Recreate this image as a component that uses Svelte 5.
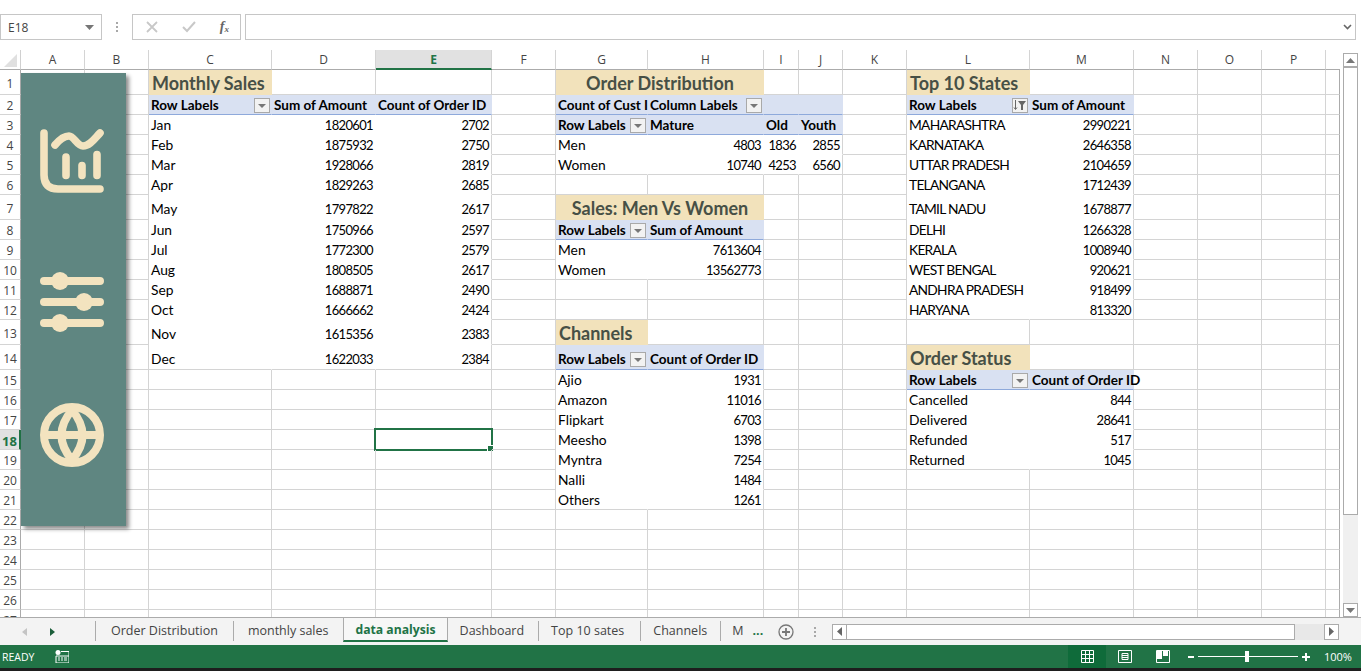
<script>
	const columns = [
		['A', 64], ['B', 64], ['C', 123], ['D', 104], ['E', 116], ['F', 64], ['G', 92], ['H', 116],
		['I', 35], ['J', 44], ['K', 64], ['L', 123], ['M', 104], ['N', 64], ['O', 64], ['P', 64], ['', 14]
	];
	const rowHeights = [25, 20, 20, 20, 20, 20, 25, 20, 20, 20, 20, 20, 25, 25, 20, 20, 20, 20, 20, 20, 20, 20, 20, 20, 20, 20, 20];
	const activeCol = 'E';
	const activeRow = 18;

	const cells = {};

	function put(ref, text, cls = '', extra = {}) {
		cells[ref] = { text, cls, ...extra };
	}

	// title strip + header row + body rows, laid into the two columns of a pivot
	function pivot(left, right, top, title, headA, headB, rows, { filter = 'down', closed = true } = {}) {
		put(left + top, title, 'title');
		put(left + (top + 1), headA, 'head', { filter });
		put(right + (top + 1), headB, 'head');
		rows.forEach(([label, value], i) => {
			const r = top + 2 + i;
			const tail = i === rows.length - 1 ? ' last-row' : '';
			const caps = /^[A-Z ]+$/.test(label) ? ' caps' : '';
			put(left + r, label, 'body' + caps + tail);
			put(right + r, value, 'body num' + (closed ? ' edge' : '') + tail);
		});
	}

	pivot('C', 'D', 1, 'Monthly Sales', 'Row Labels', 'Sum of Amount', [
		['Jan', 1820601], ['Feb', 1875932], ['Mar', 1928066], ['Apr', 1829263], ['May', 1797822], ['Jun', 1750966],
		['Jul', 1772300], ['Aug', 1808505], ['Sep', 1688871], ['Oct', 1666662], ['Nov', 1615356], ['Dec', 1622033]
	], { closed: false });
	const orderCounts = [2702, 2750, 2819, 2685, 2617, 2597, 2579, 2617, 2490, 2424, 2383, 2384];
	put('E2', 'Count of Order ID', 'head');
	orderCounts.forEach((n, i) => put('E' + (i + 3), n, i === 11 ? 'body num edge last-row' : 'body num edge'));

	// Order Distribution
	put('G1', 'Order Distribution', 'title center', { span: 2 });
	put('G2', 'Count of Cust I', 'head');
	put('H2', 'Column Labels', 'head', { filter: 'down' });
	put('I2', '', 'head');
	put('J2', '', 'head');
	put('G3', 'Row Labels', 'head rule', { filter: 'down' });
	put('H3', 'Mature', 'head rule');
	put('I3', 'Old', 'head rule');
	put('J3', 'Youth', 'head rule');
	[['Men', 4803, 1836, 2855], ['Women', 10740, 4253, 6560]].forEach(([label, a, b, c], i) => {
		const r = 4 + i;
		const tail = i === 1 ? ' last-row' : '';
		put('G' + r, label, 'body' + tail);
		put('H' + r, a, 'body num' + tail);
		put('I' + r, b, 'body num' + tail);
		put('J' + r, c, 'body num edge' + tail);
	});

	// Sales: Men Vs Women
	put('G7', 'Sales: Men Vs Women', 'title center', { span: 2 });
	put('G8', 'Row Labels', 'head rule', { filter: 'down' });
	put('H8', 'Sum of Amount', 'head rule');
	put('G9', 'Men', 'body');
	put('H9', 7613604, 'body num edge');
	put('G10', 'Women', 'body last-row');
	put('H10', 13562773, 'body num edge last-row');

	pivot('G', 'H', 13, 'Channels', 'Row Labels', 'Count of Order ID', [
		['Ajio', 1931], ['Amazon', 11016], ['Flipkart', 6703], ['Meesho', 1398], ['Myntra', 7254], ['Nalli', 1484], ['Others', 1261]
	]);
	pivot('L', 'M', 1, 'Top 10 States', 'Row Labels', 'Sum of Amount', [
		['MAHARASHTRA', 2990221], ['KARNATAKA', 2646358], ['UTTAR PRADESH', 2104659], ['TELANGANA', 1712439], ['TAMIL NADU', 1678877],
		['DELHI', 1266328], ['KERALA', 1008940], ['WEST BENGAL', 920621], ['ANDHRA PRADESH', 918499], ['HARYANA', 813320]
	], { filter: 'sorted' });
	pivot('L', 'M', 14, 'Order Status', 'Row Labels', 'Count of Order ID', [
		['Cancelled', 844], ['Delivered', 28641], ['Refunded', 517], ['Returned', 1045]
	]);

	const spanned = new Set(['H1', 'H7']);
	const tabs = ['Order Distribution', 'monthly sales', 'data analysis', 'Dashboard', 'Top 10 sates', 'Channels'];
</script>

<div class="excel">
	<div class="formula-row">
		<div class="name-box">
			<span>E18</span>
			<svg width="9" height="5" viewBox="0 0 9 5"><path d="M0 0h9L4.500 5z" fill="#767676" /></svg>
		</div>
		<div class="grip"><i></i><i></i><i></i></div>
		<div class="formula-tools">
			<svg width="12" height="12" viewBox="0 0 12 12"><path d="M1 1l10 10M11 1L1 11" stroke="#c8c8c8" stroke-width="1.800" fill="none" /></svg>
			<svg width="14" height="12" viewBox="0 0 14 12"><path d="M1 6l4 4 8-9" stroke="#c8c8c8" stroke-width="2" fill="none" /></svg>
			<span class="fx">f<sub>x</sub></span>
		</div>
		<div class="formula-input">
			<svg width="9" height="6" viewBox="0 0 9 6"><path d="M1 1l3.500 3.500L8 1" stroke="#666" stroke-width="1.600" fill="none" /></svg>
		</div>
	</div>

	<div class="work-area">
		<div class="sheet">
			<div class="corner"><svg width="13" height="13" viewBox="0 0 13 13"><path d="M13 0v13H0z" fill="#e0e0e0" /></svg></div>
			{#each columns as [name]}
				<div class="col-head" class:active={name === activeCol} class:blank={!name}>{name}</div>
			{/each}

			{#each rowHeights as height, r}
				<div class="row-head" class:active={r + 1 === activeRow}>{r + 1}</div>
				{#each columns as [name], c}
					{@const ref = (name || 'Q') + (r + 1)}
					{@const cell = cells[ref]}
					{#if !spanned.has(ref)}
						<div class="cell {cell ? cell.cls : ''}" class:tall={height === 25} class:span2={cell && cell.span === 2} class:sheet-end={!name}>
							{#if cell}
								<span class="text">{cell.text}</span>
								{#if cell.filter === 'down'}
									<span class="filter"><svg width="8" height="4" viewBox="0 0 8 4"><path d="M0 0h8L4 4z" fill="#777" /></svg></span>
								{:else if cell.filter === 'sorted'}
									<span class="filter">
										<svg width="14" height="11" viewBox="0 0 14 11">
											<path d="M2.500 0v9M1 7.500l1.500 2 1.500-2" stroke="#666" fill="none" />
											<path d="M5 1h8L10 5v5H8V5z" fill="#666" />
										</svg>
									</span>
								{/if}
							{/if}
							{#if ref === activeCol + activeRow}
								<span class="selection"></span>
							{/if}
						</div>
					{/if}
				{/each}
			{/each}

			<div class="shape">
				<svg class="icon chart" width="64" height="64" viewBox="0 0 64 64" fill="none" stroke-width="7.600" stroke-linecap="round">
					<path d="M4 3v42q0 14 14 14h42" />
					<path d="M15 15C20 9 24 6 29 6C34 6 37 16 43 16C50 16 55 8 60 3" />
					<path d="M26 27v18.500M42 35.500v10M57 24.500v21" />
				</svg>
				<svg class="icon sliders" width="64" height="64" viewBox="0 0 64 64" fill="none" stroke-width="8" stroke-linecap="round">
					<path d="M4 11h56M4 32h56M4 53h56" />
					<circle class="knob" cx="20" cy="11" r="9" />
					<circle class="knob" cx="44" cy="32" r="9" />
					<circle class="knob" cx="20" cy="53" r="9" />
				</svg>
				<svg class="icon globe" width="64" height="64" viewBox="0 0 64 64" fill="none" stroke-width="8" stroke-linejoin="round">
					<circle cx="32" cy="32" r="28" />
					<path d="M32 7Q11 32 32 57Q53 32 32 7z" />
					<path d="M4 32h56" />
				</svg>
			</div>
		</div>

		<div class="v-scroll">
			<div class="scroll-btn"><svg width="9" height="5" viewBox="0 0 9 5"><path d="M0 5h9L4.500 0z" fill="#777" /></svg></div>
			<div class="v-thumb"></div>
			<div class="v-track"></div>
			<div class="scroll-btn"><svg width="9" height="5" viewBox="0 0 9 5"><path d="M0 0h9L4.500 5z" fill="#777" /></svg></div>
		</div>
	</div>

	<div class="tab-bar">
		<div class="tab-nav">
			<svg width="5" height="8" viewBox="0 0 5 8"><path d="M5 0v8L0 4z" fill="#c4c4c4" /></svg>
			<svg width="5" height="8" viewBox="0 0 5 8"><path d="M0 0v8l5-4z" fill="#1b5e3a" /></svg>
		</div>
		<div class="tabs">
			{#each tabs as tab}
				<div class="tab" class:current={tab === 'data analysis'}>{tab}</div>
			{/each}
			<div class="tab cut">M</div>
		</div>
		<span class="more">...</span>
		<svg class="add" width="16" height="16" viewBox="0 0 16 16" fill="none" stroke="#777">
			<circle cx="8" cy="8" r="7" stroke-width="1.300" />
			<path d="M8 4v8M4 8h8" stroke-width="1.800" />
		</svg>
		<div class="grip tab-grip"><i></i><i></i><i></i></div>
		<div class="h-scroll">
			<div class="scroll-btn"><svg width="5" height="9" viewBox="0 0 5 9"><path d="M5 0v9L0 4.500z" fill="#666" /></svg></div>
			<div class="h-thumb"></div>
			<div class="h-track"></div>
			<div class="scroll-btn"><svg width="5" height="9" viewBox="0 0 5 9"><path d="M0 0v9l5-4.500z" fill="#666" /></svg></div>
		</div>
	</div>

	<div class="status-bar">
		<span class="ready">READY</span>
		<svg class="macro" width="14" height="13" viewBox="0 0 14 13">
			<circle cx="3" cy="2.500" r="2.500" fill="#fff" />
			<path d="M6 1.500h8V13H1V6h13" fill="none" stroke="#fff" />
			<path d="M3 8h2M6 8h2M9 8h3M3 10h2M6 10h2M9 10h3" stroke="#fff" />
		</svg>
		<div class="views">
			<div class="view on">
				<svg width="13" height="13" viewBox="0 0 13 13"><path d="M.5.500h12v12H.5zM.5 4.500h12M.5 8.500h12M4.500.5v12M8.500.5v12" fill="none" stroke="#fff" /></svg>
			</div>
			<div class="view">
				<svg width="14" height="13" viewBox="0 0 14 13"><path d="M.5.500h13v12H.5zM4 3.500h6v6H4zM4 5.500h6M4 7.500h6" fill="none" stroke="#fff" /></svg>
			</div>
			<div class="view">
				<svg width="14" height="13" viewBox="0 0 14 13"><path d="M.5.500h13v12H.5z" fill="none" stroke="#fff" /><path d="M1 1h5v8H1zM7 1h5v5H7z" fill="#fff" /></svg>
			</div>
		</div>
		<div class="zoom">
			<span class="zoom-minus"></span>
			<div class="zoom-track"><span class="zoom-thumb"></span></div>
			<span class="zoom-plus"></span>
			<span class="zoom-value">100%</span>
		</div>
	</div>
	<div class="bottom-edge"></div>
</div>

<style>
	:global(body) {
		margin: 0;
		background: #fff;
	}
	.excel {
		width: 1361px;
		height: 671px;
		overflow: hidden;
		display: flex;
		flex-direction: column;
		font-family: 'Open Sans', 'Noto Sans', sans-serif;
		color: #444;
		background: #fff;
	}

	/* name box + formula bar */
	.formula-row {
		height: 50px;
		flex: none;
		box-sizing: border-box;
		padding: 14px 5px 10px 0;
		display: flex;
		gap: 4px;
	}
	.name-box,
	.formula-tools,
	.formula-input {
		box-sizing: border-box;
		border: 1px solid #c6c6c6;
		display: flex;
		align-items: center;
		background: #fff;
	}
	.name-box {
		width: 102px;
		padding: 0 7px;
		justify-content: space-between;
		font-size: 12px;
	}
	.grip {
		display: flex;
		flex-direction: column;
		justify-content: center;
		gap: 2px;
		width: 22px;
		align-items: center;
	}
	.grip i {
		width: 2px;
		height: 2px;
		background: #a8a8a8;
	}
	.formula-tools {
		width: 109px;
		padding: 0 11px 0 13px;
		justify-content: space-between;
	}
	.fx {
		font-family: 'Liberation Serif', serif;
		font-style: italic;
		font-weight: bold;
		font-size: 14px;
		color: #666;
	}
	.fx sub {
		font-size: 9px;
		vertical-align: -1px;
	}
	.formula-input {
		flex: 1;
		justify-content: flex-end;
		padding-right: 3px;
	}

	/* worksheet */
	.work-area {
		flex: none;
		height: 567px;
		display: flex;
		border-bottom: 1px solid #ababab;
	}
	.sheet {
		position: relative;
		flex: none;
		width: 1340px;
		height: 567px;
		overflow: hidden;
		display: grid;
		grid-template-columns: 21px 64px 64px 123px 104px 116px 64px 92px 116px 35px 44px 64px 123px 104px 64px 64px 64px 14px;
		grid-template-rows: 20px 25px 20px 20px 20px 20px 20px 25px 20px 20px 20px 20px 20px 25px 25px 20px 20px 20px 20px 20px 20px 20px 20px 20px 20px 20px 20px 20px;
		font-family: Lato, 'Open Sans', sans-serif;
		font-size: 13.800px;
		color: #000;
	}
	.corner,
	.col-head,
	.row-head {
		font-family: 'Open Sans', 'Noto Sans', sans-serif;
		font-size: 12px;
		color: #444;
		box-sizing: border-box;
		display: flex;
		align-items: center;
		justify-content: center;
		background: #fff;
	}
	.corner {
		border-right: 1px solid #d0d0d0;
		border-bottom: 1px solid #ababab;
		justify-content: flex-end;
		align-items: flex-end;
		padding: 0 3px 2px 0;
	}
	.col-head {
		border-right: 1px solid #d4d4d4;
		border-bottom: 1px solid #ababab;
	}
	.col-head.blank {
		border-right: none;
	}
	.col-head.active {
		background: #e1e1e1;
		border-bottom: 2px solid #217346;
		color: #217346;
		font-weight: bold;
	}
	.row-head {
		border-right: 1px solid #ababab;
		border-bottom: 1px solid #d4d4d4;
		padding-top: 2px;
	}
	.row-head.active {
		background: #e1e1e1;
		border-right: 2px solid #217346;
		color: #217346;
		font-weight: bold;
		font-size: 13px;
	}

	/* cells sit on the bottom edge of their row, as in a spreadsheet */
	.cell {
		position: relative;
		box-sizing: border-box;
		min-width: 0;
		display: flex;
		align-items: flex-end;
		padding: 0 2px 1px;
		border-right: 1px solid #d4d4d4;
		border-bottom: 1px solid #d4d4d4;
		white-space: nowrap;
	}
	.cell.tall {
		padding-bottom: 2px;
	}
	.cell.sheet-end {
		border-right-color: #ababab;
	}
	.span2 {
		grid-column: span 2;
	}
	.cell.title {
		background: #f2e2bb;
		border-color: transparent;
		padding: 0 2px 0 3px;
		font-size: 18px;
		font-weight: bold;
		color: #475046;
	}
	.center {
		justify-content: center;
	}
	.head {
		background: #d9e1f2;
		border-right-color: transparent;
		border-bottom-color: #8ea9db;
		font-size: 13.500px;
		font-weight: bold;
	}
	.body {
		border-right-color: transparent;
		border-bottom-color: transparent;
	}
	.body.edge {
		border-right-color: #d4d4d4;
	}
	.body.last-row {
		border-bottom-color: #d4d4d4;
	}
	.caps {
		letter-spacing: -0.75px;
	}
	.num {
		justify-content: flex-end;
		font-size: 13px;
		letter-spacing: -0.65px;
	}
	.filter {
		box-sizing: border-box;
		flex: none;
		width: 16px;
		height: 15px;
		margin-left: auto;
		margin-right: -1px;
		display: flex;
		align-items: center;
		justify-content: center;
		background: #f2f2f2;
		border: 1px solid #a9a9a9;
	}
	.selection {
		position: absolute;
		left: -2px;
		top: -2px;
		width: 119px;
		height: 23px;
		box-sizing: border-box;
		border: 2px solid #217346;
		pointer-events: none;
	}
	.selection::after {
		content: '';
		position: absolute;
		right: -3px;
		bottom: -3px;
		width: 5px;
		height: 5px;
		background: #217346;
		border: 1px solid #fff;
	}

	/* floating shape with the dashboard icons */
	.shape {
		position: absolute;
		left: 21px;
		top: 23px;
		width: 105px;
		height: 453px;
		box-sizing: border-box;
		padding: 57px 0 0 19px;
		background: #5f8681;
		box-shadow: 3px 3px 4px rgba(0, 0, 0, 0.45);
		display: flex;
		flex-direction: column;
	}
	.icon {
		display: block;
		flex: none;
		overflow: visible;
		stroke: #f3e3bf;
	}
	.sliders {
		margin-top: 76px;
	}
	.globe {
		margin-top: 69px;
	}
	.knob {
		fill: #f3e3bf;
		stroke: none;
	}

	/* vertical scrollbar */
	.v-scroll {
		flex: 1;
		display: flex;
		flex-direction: column;
		align-items: center;
		background: #fff;
		padding-top: 3px;
	}
	.scroll-btn {
		flex: none;
		width: 15px;
		height: 14px;
		box-sizing: border-box;
		border: 1px solid #ababab;
		background: #fff;
		display: flex;
		align-items: center;
		justify-content: center;
	}
	.v-thumb {
		flex: none;
		width: 15px;
		height: 448px;
		box-sizing: border-box;
		background: #fff;
		border: 1px solid #ababab;
	}
	.v-track {
		flex: 1;
		width: 15px;
		background: #f0f0f0;
	}

	/* sheet tabs */
	.tab-bar {
		flex: none;
		height: 27px;
		background: #f3f3f3;
		display: flex;
		align-items: center;
		font-size: 12.500px;
		color: #444;
	}
	.tab-nav {
		width: 95px;
		flex: none;
		display: flex;
		gap: 23px;
		padding-left: 22px;
		box-sizing: border-box;
	}
	.tabs {
		display: flex;
		height: 100%;
	}
	.tab {
		display: flex;
		align-items: center;
		padding: 0 15px 1px 12px;
		height: 20px;
		box-sizing: border-box;
		margin-top: 3px;
		border-left: 1px solid #ababab;
	}
	.tab:first-child {
		padding-left: 15px;
	}
	.tab:nth-child(2) {
		padding-left: 14px;
	}
	.tab:nth-child(4) {
		padding-right: 14px;
	}
	.tab:nth-child(5) {
		padding-right: 16px;
	}
	.tab:nth-child(6) {
		padding-right: 13px;
	}
	.tab.current {
		height: 24px;
		margin-top: 0;
		padding: 0 11px;
		background: #f7f7f7;
		border-right: 1px solid #ababab;
		border-bottom: 2px solid #217346;
		color: #217346;
		font-size: 12.200px;
		font-weight: bold;
	}
	.tab.current + .tab {
		border-left: none;
	}
	.tab.cut {
		padding: 0 9px 1px 11px;
	}
	.more {
		color: #217346;
		font-weight: bold;
		width: 25px;
		flex: none;
		margin-top: -2px;
	}
	.add {
		flex: none;
	}
	.tab-grip {
		width: 38px;
		box-sizing: border-box;
		padding-left: 4px;
		flex: none;
	}
	.h-scroll {
		width: 507px;
		height: 16px;
		flex: none;
		display: flex;
		background: #e8e8e8;
	}
	.h-scroll .scroll-btn {
		height: 16px;
	}
	.h-thumb {
		width: 448px;
		box-sizing: border-box;
		background: #fff;
		border: 1px solid #ababab;
		border-left: none;
	}
	.h-track {
		flex: 1;
	}

	/* status bar */
	.status-bar {
		flex: none;
		height: 23px;
		background: #217346;
		color: #fff;
		display: flex;
		align-items: center;
		font-size: 10.500px;
	}
	.ready {
		margin-left: 2px;
		width: 53px;
	}
	.macro {
		flex: none;
	}
	.views {
		margin-left: auto;
		display: flex;
		height: 100%;
	}
	.view {
		width: 38px;
		display: flex;
		align-items: center;
		justify-content: center;
	}
	.view.on {
		background: #0f6b3a;
	}
	.zoom {
		display: flex;
		align-items: center;
		width: 179px;
		padding-left: 4px;
		box-sizing: border-box;
	}
	.zoom-minus {
		width: 6px;
		height: 2px;
		background: #fff;
		margin-left: 2px;
	}
	.zoom-track {
		position: relative;
		width: 100px;
		height: 1px;
		background: #fff;
		margin: 0 4px;
	}
	.zoom-thumb {
		position: absolute;
		left: 47px;
		top: -5px;
		width: 4px;
		height: 11px;
		background: #fff;
	}
	.zoom-plus {
		position: relative;
		width: 8px;
		height: 2px;
		background: #fff;
	}
	.zoom-plus::after {
		content: '';
		position: absolute;
		left: 3px;
		top: -3px;
		width: 2px;
		height: 8px;
		background: #fff;
	}
	.zoom-value {
		margin-left: 14px;
		font-size: 11px;
	}
	.bottom-edge {
		flex: 1;
		background: #1e1e1e;
	}
</style>
